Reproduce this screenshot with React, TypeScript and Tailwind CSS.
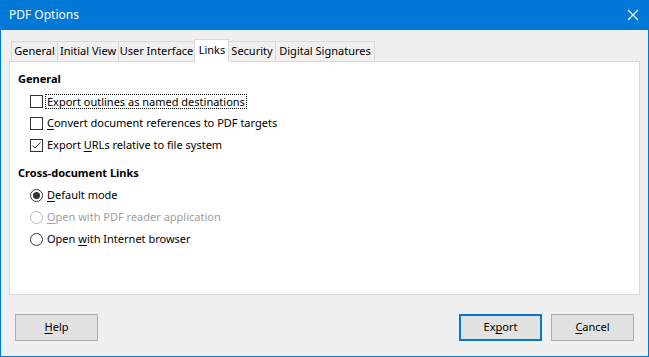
import React from 'react'

const tabs = [
  { label: 'General', w: 'w-[47px]' },
  { label: 'Initial View', w: 'w-[62px]' },
  { label: 'User Interface', w: 'w-[77px]' },
  { label: 'Links', w: 'w-[36px]', active: true },
  { label: 'Security', w: 'w-[48px]' },
  { label: 'Digital Signatures', w: 'w-[100px]' },
]

function U({ children }: { children: React.ReactNode }) {
  return <span className="underline underline-offset-2">{children}</span>
}

function Checkbox({ checked }: { checked?: boolean }) {
  return (
    <span className="w-[13px] h-[13px] border border-[#333333] bg-white flex items-center justify-center shrink-0">
      {checked && (
        <svg width="11" height="11" viewBox="0 0 11 11">
          <path d="M1.5 5.5 L4 8 L9.5 2.5" fill="none" stroke="#333333" strokeWidth="1" />
        </svg>
      )}
    </span>
  )
}

function Radio({ checked, disabled }: { checked?: boolean; disabled?: boolean }) {
  return (
    <span
      className={`w-[13px] h-[13px] rounded-full border bg-white flex items-center justify-center shrink-0 ${
        disabled ? 'border-[#bcbcbc]' : 'border-[#333333]'
      }`}
    >
      {checked && <span className="w-[7px] h-[7px] rounded-full bg-[#333333]" />}
    </span>
  )
}

function Button({ children, focused }: { children: React.ReactNode; focused?: boolean }) {
  return (
    <button
      className={`w-[83px] h-[27px] bg-[#e1e1e1] text-[11px] text-black flex items-center justify-center ${
        focused ? 'border-2 border-[#0078d7]' : 'border border-[#adadad]'
      }`}
    >
      {children}
    </button>
  )
}

export default function App() {
  return (
    <div
      className="w-[649px] h-[357px] bg-[#f0f0f0] border border-t-0 border-[#0078d7] flex flex-col text-black text-[11px] whitespace-nowrap"
      style={{ fontFamily: '"Noto Sans", "Open Sans", sans-serif' }}
    >
      <div className="h-[30px] bg-[#0078d7] flex items-center justify-between pl-2 pr-[10px] -mx-px">
        <span className="text-white text-[12px] pl-px">PDF Options</span>
        <svg width="12" height="12" viewBox="0 0 12 12">
          <path d="M1 1 L11 11 M11 1 L1 11" stroke="white" strokeWidth="1.2" />
        </svg>
      </div>

      <div className="flex-1 flex flex-col px-[8px] pt-[9px]">
        <div className="flex items-end pl-[2px] h-[22px] relative z-10">
          {tabs.map((t) =>
            t.active ? (
              <div
                key={t.label}
                className={`${t.w} h-[23px] -mx-px bg-white border border-b-0 border-[#d9d9d9] flex items-center justify-center -mb-px pb-[2px]`}
              >
                {t.label}
              </div>
            ) : (
              <div
                key={t.label}
                className={`${t.w} h-[20px] bg-[#f0f0f0] border border-b-0 border-[#d9d9d9] -ml-px first:ml-0 flex items-center justify-center`}
              >
                {t.label}
              </div>
            )
          )}
        </div>

        <div className="h-[234px] bg-white border border-[#d9d9d9] pl-[8px] pt-[8px] flex flex-col">
          <div className="font-bold h-[18px] flex items-center">General</div>
          <div className="pl-[12px] flex flex-col mt-[2px]">
            <div className="h-[22px] flex items-center gap-[3px]">
              <Checkbox />
              <span className="outline outline-1 outline-dotted outline-black px-px leading-[13px]">
                Export outlines as named destinations
              </span>
            </div>
            <div className="h-[22px] flex items-center gap-[4px]">
              <Checkbox />
              <span>
                <U>C</U>onvert document references to PDF targets
              </span>
            </div>
            <div className="h-[22px] flex items-center gap-[4px]">
              <Checkbox checked />
              <span>
                Export <U>U</U>RLs relative to file system
              </span>
            </div>
          </div>
          <div className="font-bold h-[18px] flex items-center mt-[8px]">Cross-document Links</div>
          <div className="pl-[12px] flex flex-col mt-[2px]">
            <div className="h-[22px] flex items-center gap-[4px]">
              <Radio checked />
              <span>
                <U>D</U>efault mode
              </span>
            </div>
            <div className="h-[22px] flex items-center gap-[4px] text-[#a0a0a0]">
              <Radio disabled />
              <span>
                <U>O</U>pen with PDF reader application
              </span>
            </div>
            <div className="h-[23px] flex items-center gap-[4px]">
              <Radio />
              <span>
                Open <U>w</U>ith Internet browser
              </span>
            </div>
          </div>
        </div>

        <div className="flex items-center justify-between px-[6px] mt-[19px]">
          <Button>
            <U>H</U>elp
          </Button>
          <div className="flex gap-[9px]">
            <Button focused>
              Ex<U>p</U>ort
            </Button>
            <Button>
              <U>C</U>ancel
            </Button>
          </div>
        </div>
      </div>
    </div>
  )
}
